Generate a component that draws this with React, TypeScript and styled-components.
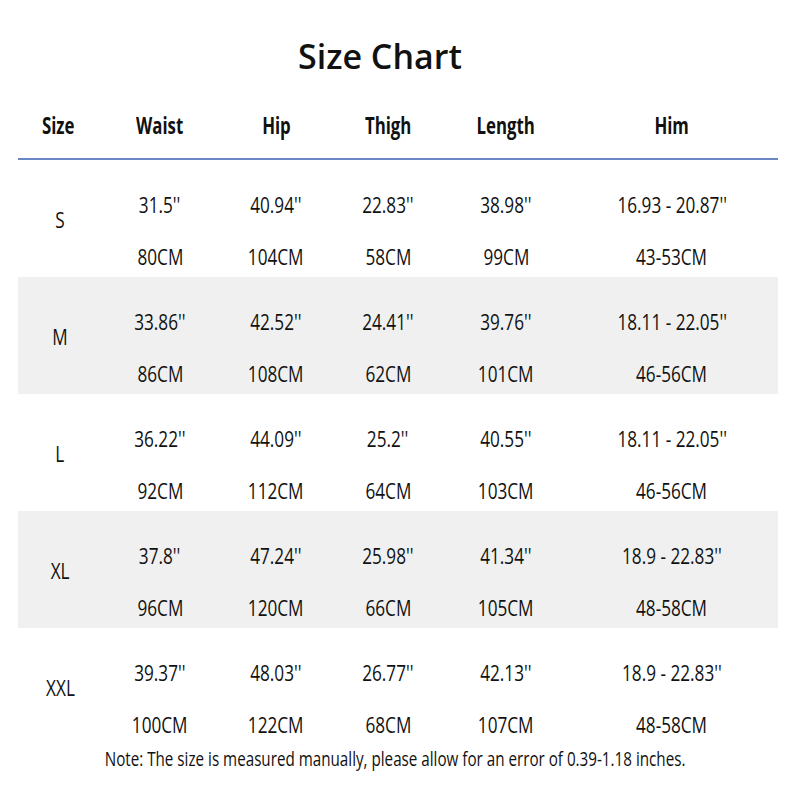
import React from "react";
import styled, { createGlobalStyle } from "styled-components";

const GlobalStyle = createGlobalStyle`
  html, body {
    margin: 0;
    padding: 0;
    background: #ffffff;
  }
  body {
    font-family: "Open Sans", "Liberation Sans", sans-serif;
    color: #111111;
  }
`;

const COLS = "80px 124px 108px 116px 120px 212px";

const Page = styled.div`
  width: 800px;
  height: 800px;
  background: #ffffff;
  display: flex;
  flex-direction: column;
  align-items: flex-start;
  padding: 34px 0 0 18px;
  box-sizing: border-box;
`;

const Title = styled.h1`
  margin: 0 0 0 280px;
  font-family: "Open Sans", sans-serif;
  font-size: 34px;
  line-height: 44px;
  font-weight: 600;
  color: #111111;
`;

const Table = styled.div`
  margin-top: 17px;
  width: 760px;
  display: flex;
  flex-direction: column;
`;

const HeaderRow = styled.div`
  display: grid;
  grid-template-columns: ${COLS};
  height: 63px;
  border-bottom: 2px solid #6a86c4;
`;

const HeaderCell = styled.div`
  display: flex;
  justify-content: center;
  font-family: "Open Sans", sans-serif;
  font-size: 24px;
  line-height: 60px;
  font-weight: 700;
  color: #111111;
`;

const Squeeze = styled.span<{ $x: number }>`
  display: inline-block;
  flex-shrink: 0;
  white-space: nowrap;
  transform: scaleX(${(p) => p.$x});
  transform-origin: center;
`;

const Row = styled.div<{ $shaded: boolean }>`
  display: grid;
  grid-template-columns: ${COLS};
  height: 117px;
  background: ${(p) => (p.$shaded ? "#f0f0f0" : "#ffffff")};
`;

const LabelCell = styled.div`
  display: flex;
  align-items: center;
  justify-content: center;
  font-size: 22px;
  line-height: 40px;
  padding: 1px 0 0 4px;
`;

const ValueCell = styled.div`
  display: grid;
  grid-template-rows: 40px 40px;
  row-gap: 12px;
  padding-top: 24px;
  justify-items: center;
  font-size: 22px;
  line-height: 40px;
`;

const Note = styled.p`
  margin: 0;
  width: 760px;
  padding-right: 5px;
  box-sizing: border-box;
  display: flex;
  justify-content: center;
  font-size: 20px;
  line-height: 28px;
  color: #111111;
`;

type SizeRow = {
  label: string;
  inch: string[];
  cm: string[];
};

const headers = ["Size", "Waist", "Hip", "Thigh", "Length", "Him"];

const rows: SizeRow[] = [
  {
    label: "S",
    inch: ["31.5''", "40.94''", "22.83''", "38.98''", "16.93 - 20.87''"],
    cm: ["80CM", "104CM", "58CM", "99CM", "43-53CM"],
  },
  {
    label: "M",
    inch: ["33.86''", "42.52''", "24.41''", "39.76''", "18.11 - 22.05''"],
    cm: ["86CM", "108CM", "62CM", "101CM", "46-56CM"],
  },
  {
    label: "L",
    inch: ["36.22''", "44.09''", "25.2''", "40.55''", "18.11 - 22.05''"],
    cm: ["92CM", "112CM", "64CM", "103CM", "46-56CM"],
  },
  {
    label: "XL",
    inch: ["37.8''", "47.24''", "25.98''", "41.34''", "18.9 - 22.83''"],
    cm: ["96CM", "120CM", "66CM", "105CM", "48-58CM"],
  },
  {
    label: "XXL",
    inch: ["39.37''", "48.03''", "26.77''", "42.13''", "18.9 - 22.83''"],
    cm: ["100CM", "122CM", "68CM", "107CM", "48-58CM"],
  },
];

export default function App() {
  return (
    <>
      <GlobalStyle />
      <Page>
        <Title>Size Chart</Title>
        <Table>
          <HeaderRow>
            {headers.map((h) => (
              <HeaderCell key={h}>
                <Squeeze $x={0.7}>{h}</Squeeze>
              </HeaderCell>
            ))}
          </HeaderRow>
          {rows.map((r, i) => (
            <Row key={r.label} $shaded={i % 2 === 1}>
              <LabelCell>
                <Squeeze $x={0.78}>{r.label}</Squeeze>
              </LabelCell>
              {r.inch.map((v, j) => (
                <ValueCell key={j}>
                  <Squeeze $x={0.78}>{v}</Squeeze>
                  <Squeeze $x={0.78}>{r.cm[j]}</Squeeze>
                </ValueCell>
              ))}
            </Row>
          ))}
        </Table>
        <Note>
          <Squeeze $x={0.76}>
            Note: The size is measured manually, please allow for an error of 0.39-1.18 inches.
          </Squeeze>
        </Note>
      </Page>
    </>
  );
}
